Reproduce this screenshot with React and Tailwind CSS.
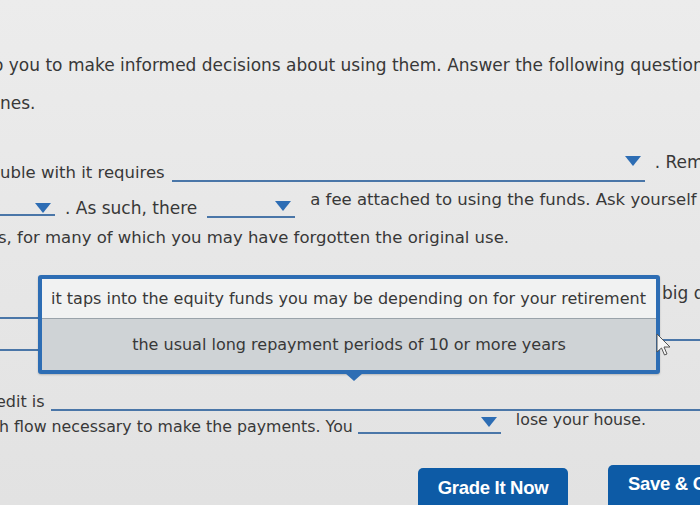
import React from "react";

const Arrow = () => (
  <svg width="16" height="11" viewBox="0 0 16 11" className="shrink-0">
    <polygon points="0,0 16,0 8,10" fill="#2d6db4" />
  </svg>
);

function Drop({ w, h, className = "" }) {
  return (
    <span
      className={`inline-flex items-start justify-end border-b-2 border-[#4a76a8] pr-[4px] shrink-0 ${className}`}
      style={{ width: w, height: h }}
    >
      <Arrow />
    </span>
  );
}

export default function App() {
  return (
    <div
      className="relative w-[700px] h-[505px] overflow-hidden bg-gradient-to-b from-[#ececec] via-[#e7e7e7] to-[#e2e2e2] text-[#383838] text-[17px] leading-[26px]"
      style={{ fontFamily: '"DejaVu Sans", Verdana, sans-serif' }}
    >
      <div className="flex flex-col whitespace-nowrap">
        <div className="h-[50px] shrink-0" />
        <div className="h-[30px] flex items-center ml-[-7px]">
          o you to make informed decisions about using them. Answer the following questions
        </div>
        <div className="h-[10px] shrink-0" />
        <div className="h-[26px] flex items-center">nes.</div>
        <div className="h-[40px] shrink-0" />
        {/* row 3 */}
        <div className="h-[34px] flex items-start">
          <span className="mt-[4px] shrink-0 text-[16.5px]">uble with it requires</span>
          <Drop w={473} h={26} className="ml-[7px]" />
          <span className="ml-[10px] mt-[-7px]">. Rem</span>
        </div>
        {/* row 4 */}
        <div className="h-[32px] flex items-start">
          <Drop w={85} h={13} className="ml-[-30px] mt-[13px]" />
          <span className="ml-[10px] mt-[5px] shrink-0">. As such, there</span>
          <Drop w={88} h={17} className="ml-[10px] mt-[11px]" />
          <span className="ml-[15px] mt-[-3px] text-[16.5px]">a fee attached to using the funds. Ask yourself</span>
        </div>
        {/* row 5 */}
        <div className="h-[32px] flex items-center">
          <span className="ml-[-2px] text-[16.5px]">s, for many of which you may have forgotten the original use.</span>
        </div>
        {/* row 6 (under popup) */}
        <div className="h-[70px] flex items-start">
          <span className="w-[640px] shrink-0 border-b-2 border-[#4a76a8] mt-[63px]" />
          <span className="ml-[22px] mt-[26px]">big dr</span>
        </div>
        <div className="h-[64px] flex items-start">
          <span className="w-[640px] shrink-0 border-b-2 border-[#4a76a8] mt-[25px]" />
          <span className="w-[60px] shrink-0 border-b-2 border-[#4a76a8] mt-[15px]" />
        </div>
        {/* edit is */}
        <div className="h-[24px] flex items-start">
          <span className="mt-[1px] ml-[-4px] shrink-0 text-[16px]">edit is</span>
          <span className="ml-[6px] flex-1 border-b-2 border-[#4a76a8] mt-[21px]" />
        </div>
        {/* cash flow */}
        <div className="h-[30px] flex items-start text-[15.8px]">
          <span className="mt-[2px] ml-[-1px] shrink-0">h flow necessary to make the payments. You</span>
          <Drop w={143} h={17} className="ml-[5px] mt-[5px]" />
          <span className="ml-[15px] mt-[-5px]">lose your house.</span>
        </div>
        <div className="h-[26px] shrink-0" />
        {/* buttons */}
        <div className="flex items-start gap-[40px] pl-[418px]">
          <button
            className="shrink-0 w-[150px] h-[44px] bg-[#0d5ba6] text-white rounded-t-[5px] text-[18.5px] font-bold pb-[4px] tracking-[-0.3px]"
            style={{ fontFamily: '"Liberation Sans", Arial, sans-serif' }}
          >
            Grade It Now
          </button>
          <button
            className="shrink-0 w-[140px] h-[48px] -mt-[3px] bg-[#0d5ba6] text-white rounded-t-[5px] text-[18.5px] font-bold text-left pl-[20px] pb-[10px] tracking-[-0.3px]"
            style={{ fontFamily: '"Liberation Sans", Arial, sans-serif' }}
          >
            Save &amp; Continue
          </button>
        </div>
      </div>

      {/* popup menu */}
      <div className="absolute left-[38px] top-[275px] w-[622px] border-[4px] border-[#2d6db4] rounded-[3px] bg-[#eef0f0] text-[16px] whitespace-nowrap shadow-[0_1px_2px_rgba(0,0,0,0.2)]">
        <div className="h-[40px] flex items-center px-[9px] bg-[#f1f2f2] border-b border-[#9aa3aa]">
          it taps into the equity funds you may be depending on for your retirement
        </div>
        <div className="h-[51px] flex items-center justify-center bg-[#cfd3d6]">
          the usual long repayment periods of 10 or more years
        </div>
        <div className="absolute left-[303px] -bottom-[11px] w-0 h-0 border-l-[9px] border-r-[9px] border-t-[8px] border-l-transparent border-r-transparent border-t-[#2d6db4]" />
      </div>

      {/* cursor */}
      <svg className="absolute left-[656px] top-[333px]" width="16" height="24" viewBox="0 0 16 24">
        <path d="M1 1 L1 19 L5.5 15 L8.5 22 L11 21 L8 14 L14 14 Z" fill="#f5f5f5" stroke="#555" strokeWidth="1" />
      </svg>
    </div>
  );
}
